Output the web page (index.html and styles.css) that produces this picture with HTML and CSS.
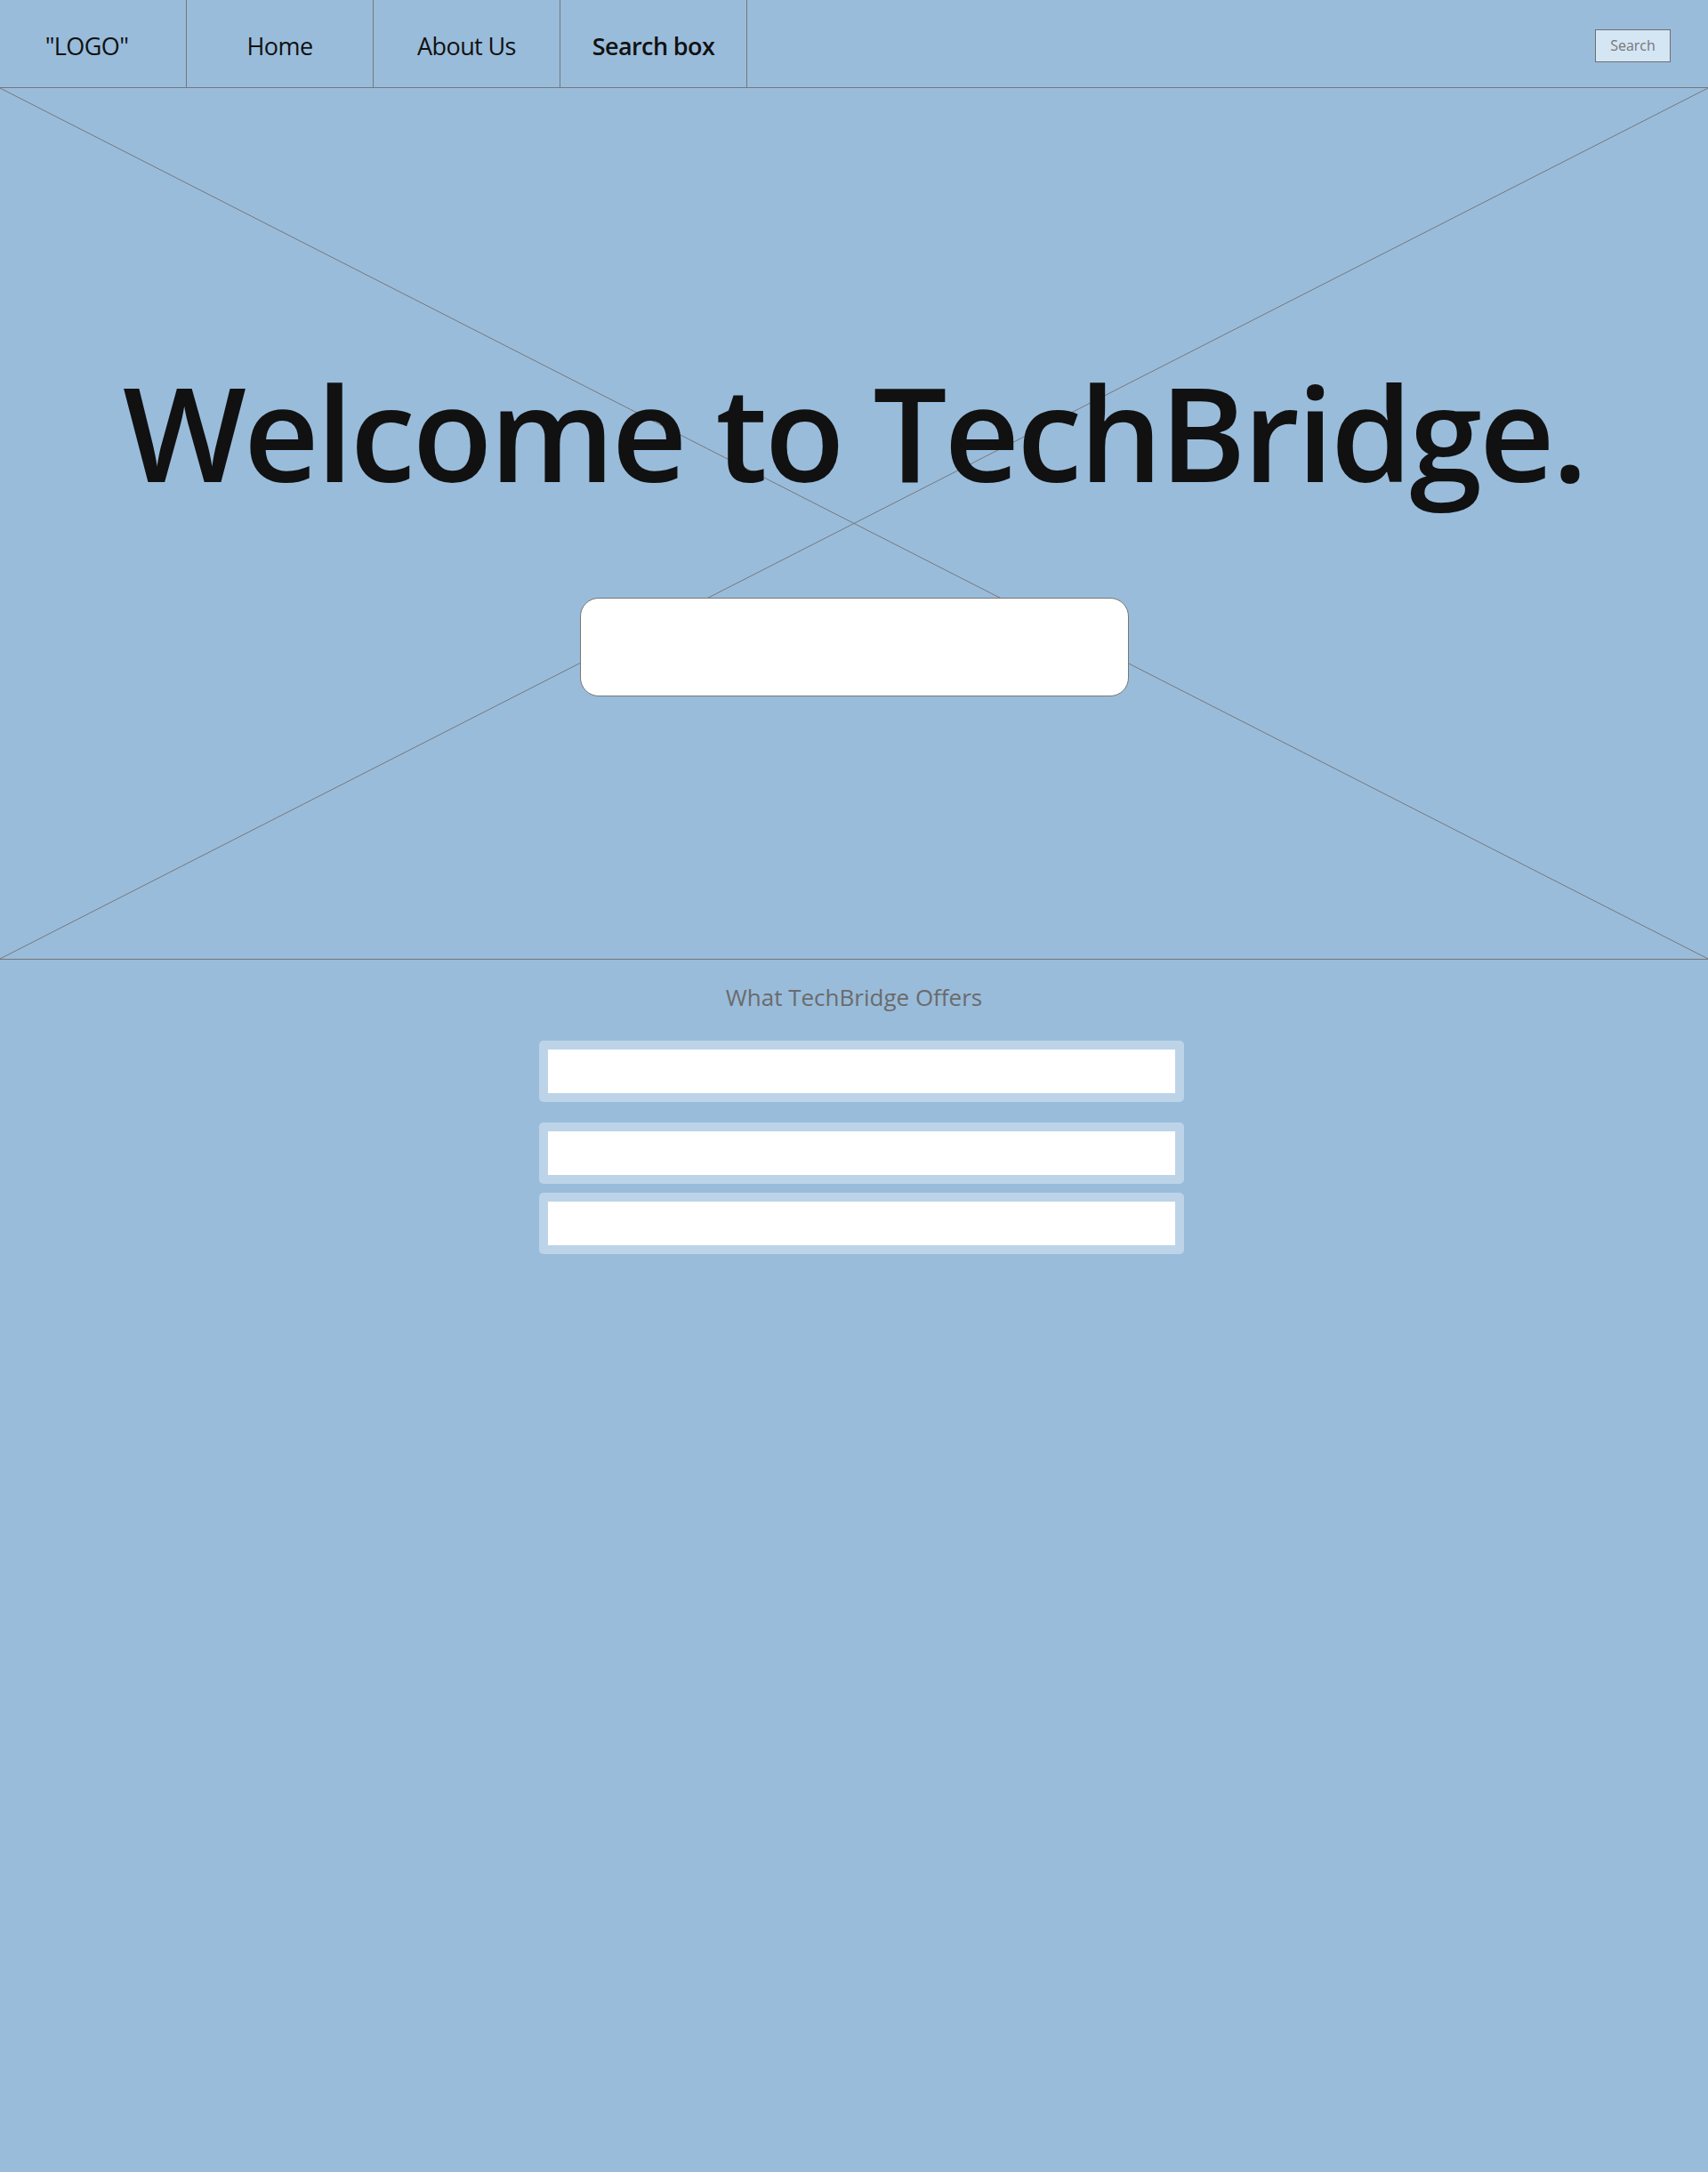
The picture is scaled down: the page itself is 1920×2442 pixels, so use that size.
FILE: index.html
```html
<!DOCTYPE html>
<html>
<head>
<meta charset="utf-8">
<title>TechBridge</title>
<link rel="stylesheet" href="styles.css">
</head>
<body>
<nav class="nav">
  <div class="nav-item nav-logo">"LOGO"</div>
  <div class="nav-item">Home</div>
  <div class="nav-item">About Us</div>
  <div class="nav-item nav-strong">Search box</div>
  <div class="nav-spacer"></div>
  <button class="search-btn">Search</button>
</nav>
<section class="hero">
  <svg class="hero-x" viewBox="0 0 1920 980" preserveAspectRatio="none">
    <line x1="0" y1="0" x2="1920" y2="980" stroke="#777" stroke-width="1"/>
    <line x1="1920" y1="0" x2="0" y2="980" stroke="#777" stroke-width="1"/>
  </svg>
  <h1 class="hero-title">Welcome to TechBridge.</h1>
  <div class="hero-input"></div>
</section>
<section class="offers">
  <h2 class="offers-title">What TechBridge Offers</h2>
  <div class="offer-list">
    <div class="offer offer-first"><div class="offer-inner"></div></div>
    <div class="offer"><div class="offer-inner"></div></div>
    <div class="offer"><div class="offer-inner"></div></div>
  </div>
</section>
</body>
</html>
```
FILE: styles.css
```css
html, body {
  margin: 0;
  padding: 0;
}
body {
  background: #99bcdb;
  font-family: "Open Sans", "Noto Sans", sans-serif;
  color: #111;
  min-height: 2442px;
}
.nav {
  display: flex;
  align-items: center;
  height: 98px;
  border-bottom: 1px solid #777;
}
.nav-item {
  width: 210px;
  height: 98px;
  border-right: 1px solid #777;
  display: flex;
  align-items: center;
  justify-content: center;
  font-size: 27px;
  font-weight: 500;
  padding-top: 4px;
  box-sizing: border-box;
  letter-spacing: -0.6px;
  flex-shrink: 0;
}
.nav-logo {
  padding-right: 14px;
}
.nav-strong {
  font-weight: 600;
}
.nav-spacer {
  flex: 1;
}
.search-btn {
  width: 85px;
  height: 37px;
  margin-right: 42px;
  background: #d4e5f4;
  border: 1px solid #6f6f6f;
  color: #777;
  font-family: "Open Sans", sans-serif;
  font-size: 16px;
  padding: 0;
  margin-top: 4px;
}
.hero {
  position: relative;
  height: 980px;
  border-bottom: 1px solid #777;
  display: flex;
  flex-direction: column;
  align-items: center;
  padding-top: 313px;
  box-sizing: border-box;
}
.hero-x {
  position: absolute;
  left: 0;
  top: 0;
  width: 100%;
  height: 100%;
}
.hero-title {
  position: relative;
  margin: 0;
  font-size: 147px;
  line-height: 1;
  font-weight: 600;
  color: #111;
  letter-spacing: -3px;
  white-space: nowrap;
}
.hero-input {
  position: relative;
  width: 615px;
  height: 109px;
  margin-top: 113px;
  margin-left: 1px;
  background: #fff;
  border: 1px solid #777;
  border-radius: 21px;
}
.offers {
  display: flex;
  flex-direction: column;
  align-items: center;
  padding-top: 29px;
}
.offers-title {
  margin: 0;
  font-size: 26px;
  line-height: 1;
  font-weight: 400;
  color: #6b6b6b;
  letter-spacing: 0;
}
.offer-list {
  display: flex;
  flex-direction: column;
  gap: 10px;
  margin-top: 36px;
  margin-left: 17px;
}
.offer {
  width: 705px;
  height: 49px;
  padding: 10px;
  background: #bdd4e8;
  border-radius: 5px;
}
.offer-first {
  margin-bottom: 13px;
}
.offer-inner {
  width: 100%;
  height: 100%;
  background: #fff;
}
```
